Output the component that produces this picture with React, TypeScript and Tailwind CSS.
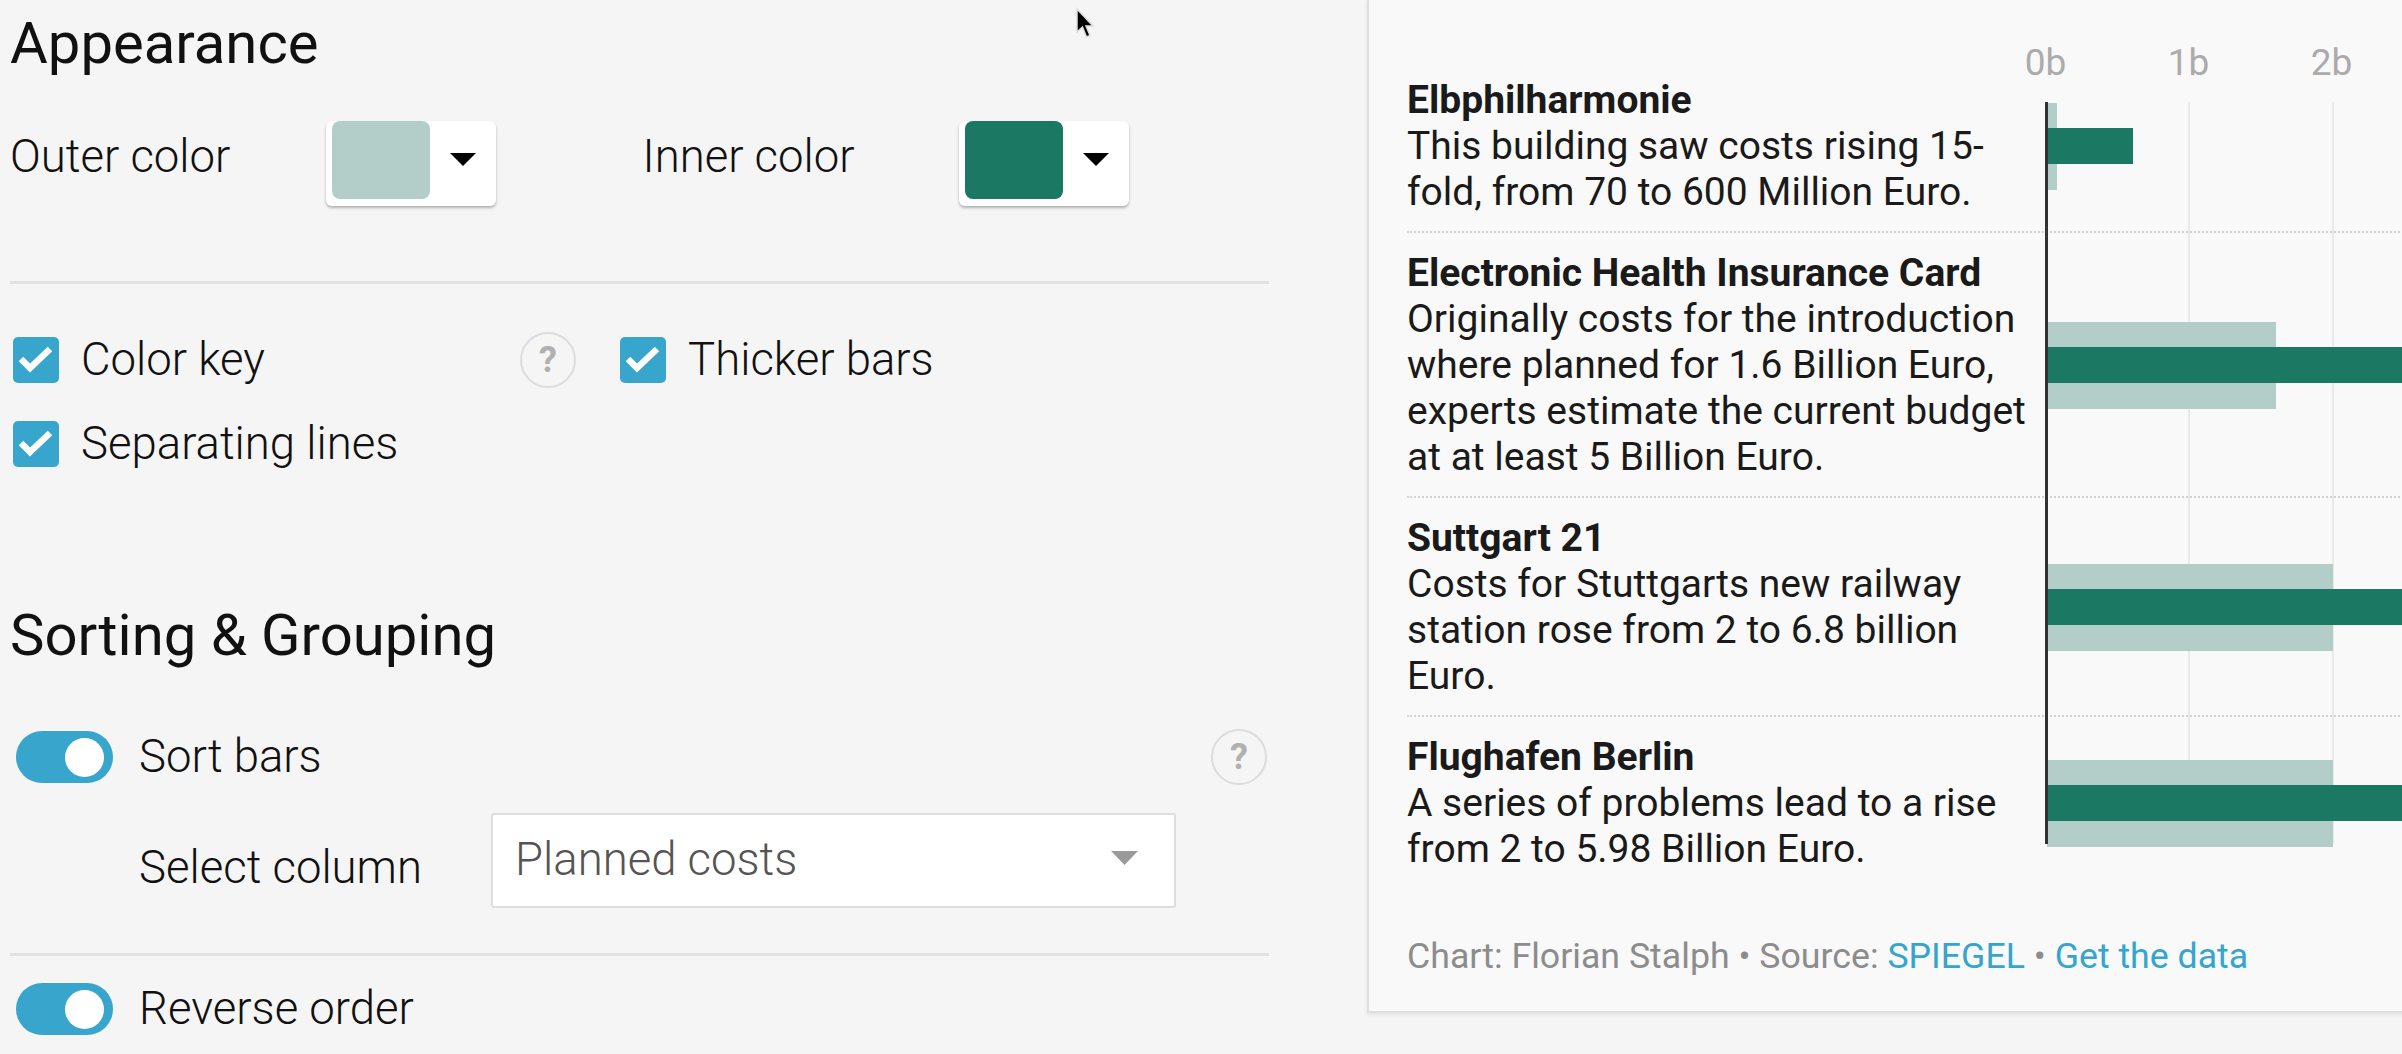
import React from "react"

const LIGHT = "#b3cec8"
const DARK = "#1b7963"
const PX_PER_B = 143

const projects = [
	{
		title: "Elbphilharmonie",
		desc: "This building saw costs rising 15-fold, from 70 to 600 Million Euro.",
		planned: 0.07,
		actual: 0.6,
	},
	{
		title: "Electronic Health Insurance Card",
		desc: "Originally costs for the introduction where planned for 1.6 Billion Euro, experts estimate the current budget at at least 5 Billion Euro.",
		planned: 1.6,
		actual: 5,
	},
	{
		title: "Suttgart 21",
		desc: "Costs for Stuttgarts new railway station rose from 2 to 6.8 billion Euro.",
		planned: 2,
		actual: 6.8,
	},
	{
		title: "Flughafen Berlin",
		desc: "A series of problems lead to a rise from 2 to 5.98 Billion Euro.",
		planned: 2,
		actual: 5.98,
	},
]

const Caret = ({ color = "#000" }: { color?: string }) => (
	<svg width="26" height="13" viewBox="0 0 26 13">
		<polygon points="0,0 26,0 13,13" fill={color} />
	</svg>
)

const ColorButton = ({ color }: { color: string }) => (
	<button className="flex h-[85px] w-[170px] shrink-0 items-start rounded-md bg-white pb-[7px] pl-[6px] shadow-[0_2px_3px_rgba(0,0,0,0.28)]">
		<span className="h-[78px] w-[98px] rounded-lg" style={{ background: color }} />
		<span className="ml-[20px] mt-[32px]">
			<Caret />
		</span>
	</button>
)

const Checkbox = () => (
	<span className="flex h-[46px] w-[46px] shrink-0 items-center justify-center rounded-[5px] bg-[#38a6cc]">
		<svg width="46" height="46" viewBox="0 0 46 46">
			<path d="M8 22 L17 31 L37 12" fill="none" stroke="#fff" strokeWidth="6.5" />
		</svg>
	</span>
)

const Help = () => (
	<span className="flex h-[56px] w-[56px] shrink-0 items-center justify-center rounded-full border-2 border-[#dcdcdc] text-[36px] leading-none font-bold text-[#b0b0b0]">
		?
	</span>
)

const Toggle = () => (
	<span className="flex h-[52px] w-[97px] shrink-0 items-center justify-end rounded-full bg-[#38a6cc] pr-[9px]">
		<span className="h-[39px] w-[39px] rounded-full bg-white" />
	</span>
)

const Divider = ({ className }: { className: string }) => (
	<div className={`h-[3px] w-full bg-[#e1e1e1] ${className}`} />
)

const Controls = () => (
	<div className="w-[1269px] shrink-0 pl-[10px]">
		<h2 className="pt-[10px] text-[58px] leading-[66px] font-normal">Appearance</h2>

		<div className="mt-[45px] grid grid-cols-2">
			<div className="flex items-start">
				<span className="w-[316px] text-[45.5px] leading-[71px] font-light">Outer color</span>
				<ColorButton color={LIGHT} />
			</div>
			<div className="flex items-start pl-[3px]">
				<span className="w-[316px] text-[45.5px] leading-[71px] font-light">Inner color</span>
				<ColorButton color={DARK} />
			</div>
		</div>

		<Divider className="mt-[75px]" />

		<div className="mt-[48px] flex h-[56px] items-center">
			<div className="flex w-[566px] items-center">
				<span className="ml-[3px]">
					<Checkbox />
				</span>
				<span className="ml-[22px] text-[45.5px] font-light">Color key</span>
				<span className="ml-auto">
					<Help />
				</span>
			</div>
			<div className="ml-[44px] flex items-center">
				<Checkbox />
				<span className="ml-[22px] text-[45.5px] font-light">Thicker bars</span>
			</div>
		</div>
		<div className="mt-[28px] flex h-[56px] items-center">
			<span className="ml-[3px]">
				<Checkbox />
			</span>
			<span className="ml-[22px] text-[45.5px] font-light">Separating lines</span>
		</div>

		<h2 className="mt-[130px] text-[58px] leading-[66px] font-normal">Sorting &amp; Grouping</h2>

		<div className="mt-[63px] flex h-[52px] items-center">
			<span className="ml-[6px]">
				<Toggle />
			</span>
			<span className="ml-[26px] text-[45.5px] font-light">Sort bars</span>
			<span className="ml-auto mr-[2px]">
				<Help />
			</span>
		</div>

		<div className="mt-[30px] flex items-start">
			<span className="ml-[129px] mt-[33px] w-[352px] text-[45.5px] leading-[44px] font-light">
				Select column
			</span>
			<div className="flex h-[95px] w-[685px] items-center justify-between rounded-[3px] border-2 border-[#dedede] bg-white pl-[22px] pr-[36px]">
				<span className="text-[45.5px] font-light text-[#555]">Planned costs</span>
				<span className="-mt-[6px]">
					<svg width="27" height="14" viewBox="0 0 27 14">
						<polygon points="0,0 27,0 13.5,14" fill="#9a9a9a" />
					</svg>
				</span>
			</div>
		</div>

		<Divider className="mt-[45px]" />

		<div className="mt-[27px] flex h-[52px] items-center">
			<span className="ml-[6px]">
				<Toggle />
			</span>
			<span className="ml-[26px] text-[45.5px] font-light">Reverse order</span>
		</div>
	</div>
)

const Chart = () => (
	<div className="ml-[98px] h-[1013px] w-[1200px] shrink-0 border-b-2 border-l-2 border-[#dedede] bg-[#f9f9f9] pl-[38px] shadow-[0_2px_4px_rgba(0,0,0,0.08)]">
		<div className="flex h-[60px] pt-[41px] text-[37px] leading-[44px] text-[#ababab]">
			<span className="w-[567px] shrink-0" />
			{["0b", "1b", "2b"].map((t) => (
				<span key={t} className="w-[143px] shrink-0 text-center">
					{t}
				</span>
			))}
		</div>

		<div className="relative">
			{/* grid lines behind the bars */}
			<div className="absolute top-[42px] bottom-[44px] left-[781px] w-[2px] bg-[#e9e9e9]" />
			<div className="absolute top-[42px] bottom-[44px] left-[925px] w-[2px] bg-[#e9e9e9]" />
			<div className="absolute top-[42px] bottom-[44px] left-[1068px] w-[2px] bg-[#e9e9e9]" />

			{projects.map((p, i) => (
				<div
					key={p.title}
					className={`flex items-center pt-[17px] pb-[16px] ${
						i < projects.length - 1 ? "border-b-2 border-dotted border-[#d2d2d2]" : ""
					}`}>
					<div className="w-[630px] shrink-0 text-[39px] leading-[46px] text-[#1a1a1a]">
						<div className="font-bold">{p.title}</div>
						<div>{p.desc}</div>
					</div>
					<div className="relative ml-[10px] grid flex-1 items-center justify-items-start">
						<div
							className="col-start-1 row-start-1 h-[87px]"
							style={{ width: p.planned * PX_PER_B, background: LIGHT }}
						/>
						<div
							className="col-start-1 row-start-1 h-[36px]"
							style={{ width: p.actual * PX_PER_B, background: DARK }}
						/>
					</div>
				</div>
			))}

			{/* zero axis on top */}
			<div className="absolute top-[42px] bottom-[44px] left-[638px] w-[3px] bg-[#333]" />
		</div>

		<p className="mt-[46px] text-[35.7px] leading-[44px] whitespace-nowrap text-[#8c8c8c]">
			Chart: Florian Stalph • Source: <span className="text-[#35a5cf]">SPIEGEL</span> •{" "}
			<span className="text-[#35a5cf]">Get the data</span>
		</p>
	</div>
)

export default function App() {
	return (
		<div className="relative flex h-[1054px] w-[2402px] overflow-hidden bg-[#f5f5f5] font-['Roboto','Liberation_Sans',sans-serif] text-[#111]">
			<Controls />
			<Chart />
			{/* mouse pointer */}
			<svg className="absolute top-[7px] left-[1075px]" width="22" height="34" viewBox="0 0 22 34">
				<path d="M2 2 L2 25 L7.5 20 L11.5 30 L15 28.5 L11 19 L18 19 Z" fill="#000" stroke="#ddd" strokeWidth="1.5" />
			</svg>
		</div>
	)
}
